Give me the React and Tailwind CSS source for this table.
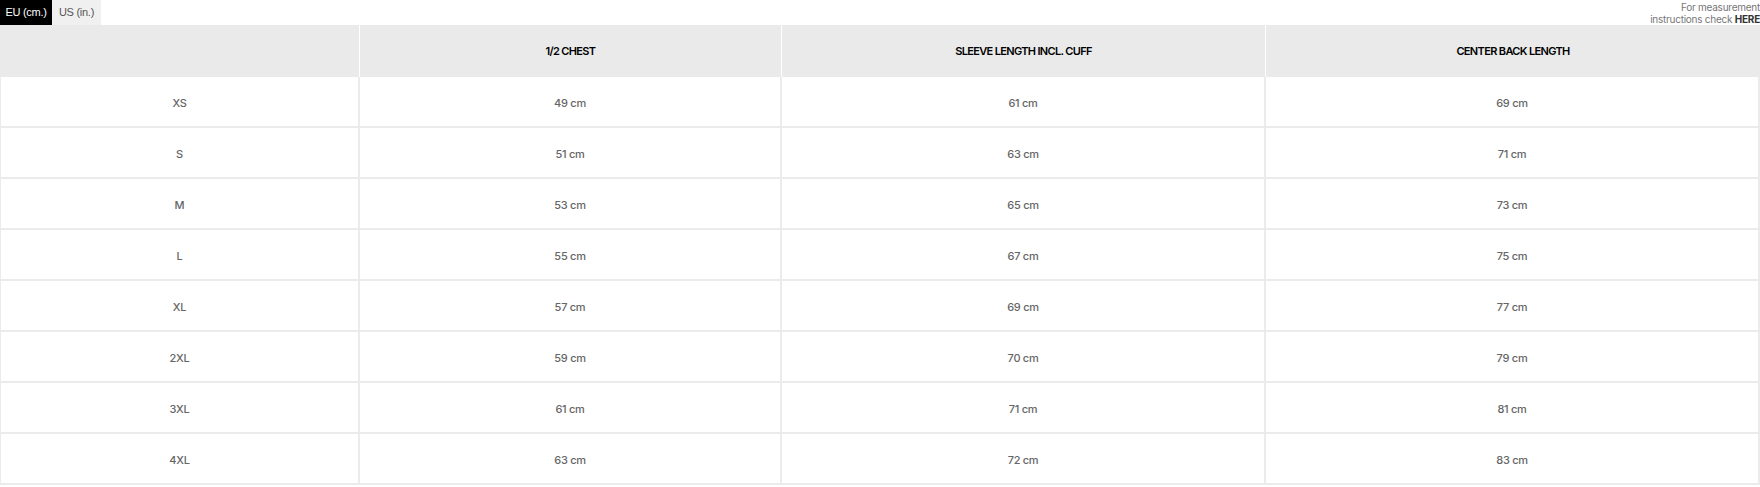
import React, { useState } from 'react';

const rows = [
  ['XS', '49 cm', '61 cm', '69 cm'],
  ['S', '51 cm', '63 cm', '71 cm'],
  ['M', '53 cm', '65 cm', '73 cm'],
  ['L', '55 cm', '67 cm', '75 cm'],
  ['XL', '57 cm', '69 cm', '77 cm'],
  ['2XL', '59 cm', '70 cm', '79 cm'],
  ['3XL', '61 cm', '71 cm', '81 cm'],
  ['4XL', '63 cm', '72 cm', '83 cm'],
];

const headers = ['', '1/2 CHEST', 'SLEEVE LENGTH INCL. CUFF', 'CENTER BACK LENGTH'];
const widths = ['w-[360px]', 'w-[422px]', 'w-[484px]', 'w-[494px]'];

const App = () => {
  const [unit, setUnit] = useState('eu');

  return (
    <div className="w-[1760px] bg-white font-['Inter',sans-serif]">
      <div className="flex items-start justify-between h-[25px]">
        <div className="flex h-[25px] font-['Liberation_Sans',Arial,sans-serif]">
          <button
            onClick={() => setUnit('eu')}
            className={`w-[52px] text-[11px] leading-[25px] tracking-tight ${unit === 'eu' ? 'bg-black text-white' : 'bg-[#f0f0f0] text-[#555]'}`}
          >
            EU (cm.)
          </button>
          <button
            onClick={() => setUnit('us')}
            className={`w-[49px] text-[11px] leading-[25px] tracking-tight ${unit === 'us' ? 'bg-black text-white' : 'bg-[#f0f0f0] text-[#555]'}`}
          >
            US (in.)
          </button>
        </div>
        <p className="text-right text-[10px] leading-[12px] text-[#777] tracking-tight pt-[1px]">
          For measurement
          <br />
          instructions check <span className="font-bold text-[#333]">HERE</span>
        </p>
      </div>

      <table className="border-separate border-spacing-0 table-fixed w-[1760px]">
        <thead>
          <tr>
            {headers.map((h, i) => (
              <th
                key={i}
                className={`${widths[i]} h-[52px] pt-[1px] bg-[#eaeaea] text-[11px] font-semibold text-black tracking-[-0.06em] text-center ${i < 3 ? 'border-r border-white' : ''}`}
              >
                {h}
              </th>
            ))}
          </tr>
        </thead>
        <tbody>
          {rows.map((r) => (
            <tr key={r[0]}>
              {r.map((c, i) => (
                <td
                  key={i}
                  className={`h-[51px] pt-[3px] text-center text-[11px] font-medium text-[#666] tracking-tight border-b-2 border-r-2 border-[#ebebeb] ${i === 0 ? 'border-l' : ''}`}
                >
                  {c}
                </td>
              ))}
            </tr>
          ))}
        </tbody>
      </table>
    </div>
  );
};

export default App;
